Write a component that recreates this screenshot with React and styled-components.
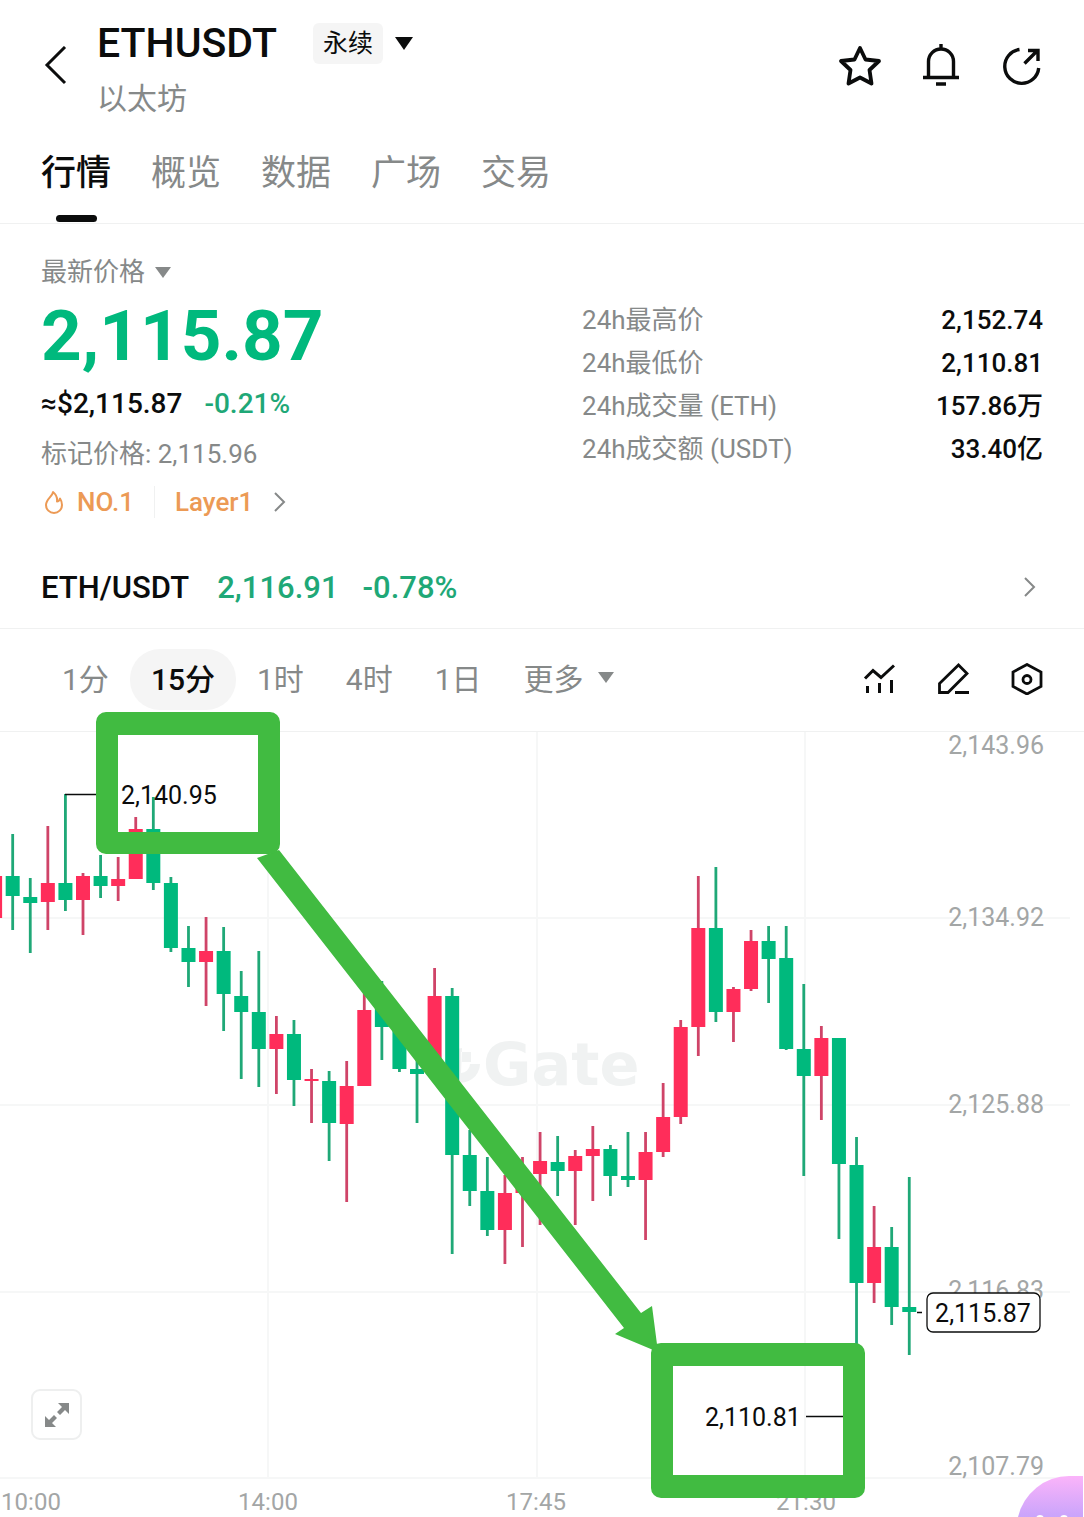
import { useState } from "react";
import styled, { createGlobalStyle } from "styled-components";

const Colors = {
  Text: "#0b0c0c",
  Gray: "#868989",
  Axis: "#a3a6a6",
  Border: "#f0f1f1",
  Grid: "#f6f7f7",
  Chip: "#f5f5f5",
  Up: "#ff2d5a",
  UpWick: "#cf4468",
  Down: "#00b97d",
  DownWick: "#1fa877",
  Orange: "#ec9a55",
  Marker: "#41bb41",
};

const GlobalStyle = createGlobalStyle`
  * {
    box-sizing: border-box;
  }

  body {
    margin: 0;
    background-color: #fff;
    color: ${Colors.Text};
    font-family: Roboto, "Noto Sans CJK SC", sans-serif;
  }

  button {
    padding: 0;
    border: none;
    background: none;
    color: inherit;
    font: inherit;
    cursor: pointer;
  }

  a {
    color: inherit;
    text-decoration: none;
  }

  svg {
    display: block;
  }
`;

const Page = styled.main`
  position: relative;
  overflow: hidden;
`;

const Header = styled.header`
  display: flex;
  align-items: flex-start;
  padding: 20px 40px 0 42px;
`;

const BackBtn = styled.button`
  display: flex;
  align-items: center;
  width: 55px;
  height: 92px;
`;

const TitleBlock = styled.div`
  display: flex;
  flex-direction: column;
  gap: 16px;
  flex: 1;
`;

const TitleRow = styled.div`
  display: flex;
  align-items: center;
  height: 46px;
`;

const Title = styled.h1`
  margin: 0 36px 0 0;
  font-size: 41px;
  line-height: 46px;
  font-weight: 500;
`;

const TypeBtn = styled.button`
  display: flex;
  align-items: center;
  gap: 12px;
`;

const Badge = styled.span`
  padding: 1px 10px 0;
  border-radius: 6px;
  background-color: ${Colors.Chip};
  font-size: 25px;
  line-height: 40px;
`;

const SubTitle = styled.span`
  color: ${Colors.Gray};
  font-size: 30px;
  line-height: 34px;
`;

const HeaderActions = styled.div`
  display: flex;
  align-items: center;
  gap: 37px;
  height: 92px;
`;

const Tabs = styled.nav`
  display: flex;
  gap: 40px;
  padding: 32px 41px 0;
  border-bottom: 1px solid ${Colors.Border};
`;

const Tab = styled.button`
  display: flex;
  flex-direction: column;
  align-items: center;
  gap: 15px;
  padding-bottom: 1px;
  color: ${(p) => (p.$active ? Colors.Text : Colors.Gray)};
  font-size: 35px;
  font-weight: ${(p) => (p.$active ? 500 : 400)};
  line-height: 52px;

  &::after {
    content: "";
    width: 41px;
    height: 7px;
    border-radius: 4px;
    background-color: ${(p) => (p.$active ? Colors.Text : "transparent")};
  }
`;

const Summary = styled.section`
  display: grid;
  grid-template-columns: 54fr 46fr;
  padding: 30px 41px 28px;
`;

const PriceLabel = styled.button`
  display: flex;
  align-items: center;
  gap: 10px;
  color: ${Colors.Gray};
  font-size: 26px;
  line-height: 36px;
`;

const BigPrice = styled.div`
  margin-top: 5px;
  color: ${Colors.Down};
  font-size: 71px;
  font-weight: 700;
  line-height: 82px;
`;

const SubPrice = styled.div`
  display: flex;
  gap: 22px;
  margin-top: 11px;
  font-size: 28px;
  font-weight: 500;
  line-height: 32px;
`;

const Change = styled.span`
  color: ${Colors.DownWick};
`;

const MarkPrice = styled.div`
  margin-top: 18px;
  color: ${Colors.Gray};
  font-size: 26px;
  line-height: 32px;
`;

const Tags = styled.a`
  display: flex;
  align-items: center;
  margin-top: 16px;
  color: ${Colors.Orange};
  font-size: 26px;
  font-weight: 500;
  line-height: 32px;
`;

const TagText = styled.span`
  padding: 0 20px 0 10px;

  & + & {
    padding-left: 20px;
    padding-right: 14px;
    border-left: 1px solid ${Colors.Border};
  }
`;

const Stats = styled.dl`
  margin: 0;
  padding-top: 45px;
  font-size: 26px;
  line-height: 43px;
`;

const StatRow = styled.div`
  display: flex;
  justify-content: space-between;

  dt {
    color: ${Colors.Gray};
  }

  dd {
    margin: 0;
    font-weight: 500;
  }
`;

const SpotLink = styled.a`
  display: flex;
  align-items: center;
  height: 83px;
  padding: 0 41px;
  border-bottom: 1px solid ${Colors.Border};
  font-size: 31px;
  font-weight: 500;

  ${Change} {
    margin-left: 24px;
  }

  ${Change}:nth-child(2) {
    margin-left: 28px;
  }

  svg {
    margin-left: auto;
  }
`;

const Toolbar = styled.div`
  display: flex;
  align-items: center;
  justify-content: space-between;
  height: 103px;
  padding: 0 41px 2px;
  border-bottom: 1px solid ${Colors.Border};
`;

const Periods = styled.div`
  display: flex;
`;

const Period = styled.button`
  display: flex;
  align-items: center;
  gap: 14px;
  height: 61px;
  padding: 0 21px 4px;
  border-radius: 30px;
  background-color: ${(p) => (p.$active ? Colors.Chip : "transparent")};
  color: ${(p) => (p.$active ? Colors.Text : Colors.Gray)};
  font-size: 30px;
  font-weight: ${(p) => (p.$active ? 500 : 400)};
`;

const Tools = styled.div`
  display: flex;
  gap: 42px;
`;

const ChartArea = styled.section`
  position: relative;
`;

const ChartSvg = styled.svg`
  width: 100%;
  height: auto;
  overflow: visible;
  font-size: 25px;
`;

const TimeLabels = styled.g`
  fill: ${Colors.Axis};
  font-size: 24px;
  text-anchor: middle;
`;

const Watermark = styled.text`
  fill: #f0f2f2;
  font-family: "DejaVu Sans", sans-serif;
  font-size: 59px;
  font-weight: 700;
`;

const ExpandBtn = styled.button`
  position: absolute;
  left: 31px;
  bottom: 77px;
  display: grid;
  place-items: center;
  width: 51px;
  height: 51px;
  border: 2px solid #eeefef;
  border-radius: 9px;
  background-color: #fff;
`;

const Assistant = styled.button`
  position: absolute;
  right: 1px;
  bottom: 0;
  width: 66px;
  height: 41px;
`;

const Caret = ({ width = 16, height = 11 }) => (
  <svg width={width} height={height} viewBox="0 0 16 11" preserveAspectRatio="none">
    <path d="M0 0h16L8 11z" fill="currentColor" />
  </svg>
);

const Chevron = () => (
  <svg width="26" height="26" viewBox="0 0 26 26" fill="none">
    <path d="M8 4l9 9-9 9" stroke={Colors.Gray} strokeWidth="2" />
  </svg>
);

const Icon = ({ size, width, children }) => (
  <svg
    width={size}
    height={size}
    viewBox={`0 0 ${size} ${size}`}
    fill="none"
    stroke={Colors.Text}
    strokeWidth={width}
  >
    {children}
  </svg>
);

const stats = [
  ["24h最高价", "2,152.74"],
  ["24h最低价", "2,110.81"],
  ["24h成交量 (ETH)", "157.86万"],
  ["24h成交额 (USDT)", "33.40亿"],
];

const tabs = ["行情", "概览", "数据", "广场", "交易"];
const periods = ["1分", "15分", "1时", "4时", "1日"];

const priceAxis = [
  ["2,143.96", 754],
  ["2,134.92", 926],
  ["2,125.88", 1113],
  ["2,116.83", 1299],
  ["2,107.79", 1475],
];

const timeAxis = [
  ["10:00", 31],
  ["14:00", 268],
  ["17:45", 536],
  ["21:30", 806],
];

// up, high, body top, body bottom, low
const candles = [
  [1, 876, 876, 918, 918],
  [0, 834, 876, 896, 930],
  [0, 878, 897, 903, 953],
  [1, 826, 883, 902, 930],
  [0, 794, 883, 900, 911],
  [1, 873, 876, 900, 935],
  [0, 855, 876, 886, 898],
  [1, 857, 879, 886, 901],
  [1, 817, 829, 879, 879],
  [0, 797, 829, 883, 890],
  [0, 877, 883, 948, 952],
  [0, 926, 948, 962, 987],
  [1, 917, 951, 962, 1006],
  [0, 927, 951, 994, 1031],
  [0, 971, 996, 1012, 1079],
  [0, 951, 1012, 1049, 1087],
  [1, 1016, 1034, 1049, 1094],
  [0, 1020, 1034, 1080, 1106],
  [1, 1069, 1079, 1081, 1123],
  [0, 1071, 1081, 1123, 1161],
  [1, 1061, 1086, 1124, 1202],
  [1, 990, 1010, 1086, 1086],
  [0, 981, 1008, 1027, 1060],
  [0, 1020, 1027, 1069, 1072],
  [0, 1050, 1069, 1074, 1123],
  [1, 968, 996, 1060, 1062],
  [0, 988, 996, 1155, 1254],
  [0, 1130, 1155, 1191, 1206],
  [0, 1157, 1191, 1230, 1236],
  [1, 1175, 1193, 1230, 1264],
  [1, 1157, 1174, 1193, 1247],
  [1, 1132, 1161, 1174, 1225],
  [0, 1136, 1162, 1171, 1196],
  [1, 1150, 1156, 1171, 1225],
  [1, 1126, 1149, 1156, 1201],
  [0, 1145, 1149, 1176, 1196],
  [0, 1132, 1176, 1180, 1187],
  [1, 1132, 1152, 1180, 1240],
  [1, 1083, 1117, 1152, 1157],
  [1, 1020, 1027, 1117, 1124],
  [1, 876, 928, 1027, 1056],
  [0, 867, 928, 1012, 1022],
  [1, 987, 989, 1012, 1042],
  [1, 930, 941, 989, 991],
  [0, 926, 941, 959, 1003],
  [0, 926, 958, 1049, 1050],
  [0, 984, 1049, 1076, 1176],
  [1, 1026, 1038, 1076, 1120],
  [0, 1038, 1038, 1164, 1239],
  [0, 1137, 1165, 1283, 1416],
  [1, 1206, 1247, 1283, 1303],
  [0, 1227, 1247, 1307, 1325],
  [0, 1177, 1307, 1312, 1355],
];

const STEP = 17.58;

function Chart() {
  return (
    <ChartArea>
      <ChartSvg viewBox="0 732 1084 785" role="img" aria-label="ETHUSDT 15分">
        <g stroke={Colors.Grid} strokeWidth="2">
          {[918, 1105, 1292, 1478].map((y) => (
            <line key={y} x1="0" x2="1070" y1={y} y2={y} />
          ))}
          {[268, 537, 805].map((x) => (
            <line key={x} x1={x} x2={x} y1="732" y2="1478" />
          ))}
        </g>

        <path
          d="M462 1048a18 18 0 0 0-6 34a19 19 0 0 0 24-18h-10a9 9 0 0 1-9 9M461 1052h10v10h-10z"
          fill="#f0f2f2"
        />
        <Watermark x="483" y="1085">
          Gate
        </Watermark>

        <g fill={Colors.Axis} textAnchor="end">
          {priceAxis.map(([label, y]) => (
            <text key={label} x="1044" y={y}>
              {label}
            </text>
          ))}
        </g>
        <TimeLabels>
          {timeAxis.map(([label, x]) => (
            <text key={label} x={x} y="1510">
              {label}
            </text>
          ))}
        </TimeLabels>

        {candles.map(([up, high, top, bottom, low], i) => {
          const x = -4.9 + i * STEP;
          return (
            <g key={i}>
              <line
                x1={x}
                x2={x}
                y1={high}
                y2={low}
                stroke={up ? Colors.UpWick : Colors.DownWick}
                strokeWidth="2.8"
              />
              <rect
                x={x - 7}
                y={top}
                width="14"
                height={bottom - top}
                fill={up ? Colors.Up : Colors.Down}
              />
            </g>
          );
        })}

        <g stroke={Colors.Text} strokeWidth="1.3">
          <path d="M65 794.500h34M806 1416.500h50M917 1312.500h5" />
          <rect x="927" y="1293" width="113" height="39" rx="6" fill="#fff" />
        </g>
        <g fill={Colors.Text}>
          <text x="121" y="804">
            2,140.95
          </text>
          <text x="705" y="1426">
            2,110.81
          </text>
          <text x="983" y="1322" textAnchor="middle">
            2,115.87
          </text>
        </g>

        <path
          d="M257 858L279 850 641 1313 652 1306 658 1352 615 1334 624 1328z"
          fill={Colors.Marker}
        />
        <path
          fillRule="evenodd"
          d="M106 712h164a10 10 0 0 1 10 10v122a10 10 0 0 1-10 10h-164a10 10 0 0 1-10-10v-122a10 10 0 0 1 10-10zM118 735v97h140v-97zM661 1343h194a10 10 0 0 1 10 10v135a10 10 0 0 1-10 10h-194a10 10 0 0 1-10-10v-135a10 10 0 0 1 10-10zM673 1366v109h170v-109z"
          fill={Colors.Marker}
        />
      </ChartSvg>
      <ExpandBtn aria-label="全屏">
        <svg width="26" height="26" viewBox="0 0 26 26" fill={Colors.Gray}>
          <path d="M14 1h11v11l-4-4-5 5-3-3 5-5zM12 25H1V14l4 4 5-5 3 3-5 5z" />
        </svg>
      </ExpandBtn>
    </ChartArea>
  );
}

export default function App() {
  const [tab, setTab] = useState("行情");
  const [period, setPeriod] = useState("15分");

  return (
    <Page>
      <GlobalStyle />
      <Header>
        <BackBtn aria-label="返回">
          <svg width="26" height="40" viewBox="0 0 26 40" fill="none">
            <path d="M23 1L5 19l18 18" stroke={Colors.Text} strokeWidth="3" />
          </svg>
        </BackBtn>
        <TitleBlock>
          <TitleRow>
            <Title>ETHUSDT</Title>
            <TypeBtn>
              <Badge>永续</Badge>
              <Caret width={18} height={13} />
            </TypeBtn>
          </TitleRow>
          <SubTitle>以太坊</SubTitle>
        </TitleBlock>
        <HeaderActions>
          <button aria-label="收藏">
            <Icon size={44} width={3.8}>
              <path
                d="M22 4l5.500 11.500L41 17 31.500 26 33.500 39.500 22 33.500 10.500 39.500 12.500 26 3 17l13.500-1.500z"
                strokeLinejoin="round"
              />
            </Icon>
          </button>
          <button aria-label="提醒">
            <Icon size={44} width={3.4}>
              <path d="M22 0v5M9.500 33.500V17.500a12.500 12.500 0 0 1 25 0v16M4 33.500h36M17 40h10" />
            </Icon>
          </button>
          <button aria-label="分享">
            <Icon size={44} width={3.4}>
              <path d="M19.500 5.500A17 17 0 1 0 38.700 24M24.500 19.500L37.500 6.500M28 6.500h10v10.500" />
            </Icon>
          </button>
        </HeaderActions>
      </Header>

      <Tabs>
        {tabs.map((t) => (
          <Tab key={t} $active={t === tab} onClick={() => setTab(t)}>
            {t}
          </Tab>
        ))}
      </Tabs>

      <Summary>
        <div>
          <PriceLabel>
            最新价格
            <Caret />
          </PriceLabel>
          <BigPrice>2,115.87</BigPrice>
          <SubPrice>
            <span>≈$2,115.87</span>
            <Change>-0.21%</Change>
          </SubPrice>
          <MarkPrice>标记价格: 2,115.96</MarkPrice>
          <Tags href="#layer1">
            <svg width="26" height="26" viewBox="0 0 26 26" fill="none">
              <path
                d="M12 3C12 7 5 10 5 16a8 8 0 0 0 16 0C21 13 20 11 19 9.500C18.500 11.500 17.500 12.500 16 12.500C16.500 8.500 14.500 5 12 3z"
                stroke={Colors.Orange}
                strokeWidth="2"
                strokeLinejoin="round"
              />
            </svg>
            <TagText>NO.1</TagText>
            <TagText>Layer1</TagText>
            <Chevron />
          </Tags>
        </div>
        <Stats>
          {stats.map(([label, value]) => (
            <StatRow key={label}>
              <dt>{label}</dt>
              <dd>{value}</dd>
            </StatRow>
          ))}
        </Stats>
      </Summary>

      <SpotLink href="#spot">
        <span>ETH/USDT</span>
        <Change>2,116.91</Change>
        <Change>-0.78%</Change>
        <Chevron />
      </SpotLink>

      <Toolbar>
        <Periods>
          {periods.map((p) => (
            <Period key={p} $active={p === period} onClick={() => setPeriod(p)}>
              {p}
            </Period>
          ))}
          <Period>
            更多
            <Caret />
          </Period>
        </Periods>
        <Tools>
          <button aria-label="指标">
            <Icon size={32} width={3}>
              <path d="M2 15.500L10 7.500 18 14.500 31 2.500M4.500 23v7M16.500 20v10M28.500 17v13" />
            </Icon>
          </button>
          <button aria-label="画线">
            <Icon size={32} width={2.8}>
              <path d="M2.500 29.500v-9L21.500 2 30 10.500 11 29.500zM18 29.500h14" />
            </Icon>
          </button>
          <button aria-label="设置">
            <Icon size={32} width={2.8}>
              <path d="M16 1.500L30 9v14.500L16 31 2 23.500V9z" />
              <circle cx="16" cy="16.500" r="4" />
            </Icon>
          </button>
        </Tools>
      </Toolbar>

      <Chart />

      <Assistant aria-label="助手">
        <svg width="66" height="41" viewBox="0 0 66 41">
          <defs>
            <linearGradient id="assistant" x1="0" y1="0" x2="0" y2="1">
              <stop offset="0" stopColor="#fbb4fa" />
              <stop offset="1" stopColor="#c9a4fb" />
            </linearGradient>
          </defs>
          <path d="M66 0H52A53 53 0 0 0 1 41h65z" fill="url(#assistant)" />
          <circle cx="23" cy="43" r="4" fill="#fff" />
          <circle cx="47" cy="43" r="4" fill="#fff" />
        </svg>
      </Assistant>
    </Page>
  );
}
